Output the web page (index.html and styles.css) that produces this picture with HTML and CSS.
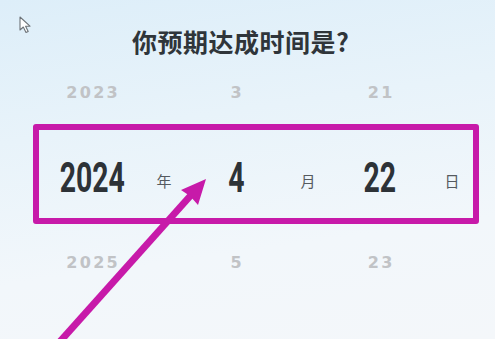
FILE: index.html
```html
<!DOCTYPE html>
<html lang="zh">
<head>
    <meta charset="utf-8"/>
    <title>日期选择</title>
    <link rel="stylesheet" href="styles.css">
</head>
<body>
<div class="page">
    <h1 class="title">你预期达成时间是?</h1>

    <div class="row row-dim">
        <span class="num">2023</span><span></span>
        <span class="num">3</span><span></span>
        <span class="num">21</span><span></span>
    </div>

    <div class="picked">
        <div class="row row-main">
            <span class="num"><b>2024</b></span><span class="unit">年</span>
            <span class="num"><b>4</b></span><span class="unit">月</span>
            <span class="num"><b>22</b></span><span class="unit">日</span>
        </div>
    </div>

    <div class="row row-dim row-next">
        <span class="num">2025</span><span></span>
        <span class="num">5</span><span></span>
        <span class="num">23</span><span></span>
    </div>

    <!-- 鼠标 -->
    <svg class="cursor" width="14" height="18" viewBox="0 0 14 18">
        <path d="M1 1 L1 14 L4.3 11 L7 16.5 L9.2 15.5 L6.6 10.2 L11 10.2 Z" fill="#fff" stroke="#6d7378" stroke-width="1.1" stroke-linejoin="round"/>
    </svg>

    <!-- 标注箭头 -->
    <svg class="arrow" width="495" height="339" viewBox="0 0 495 339">
        <line x1="56" y1="346" x2="192" y2="194" stroke="#c71aa9" stroke-width="7"/>
        <polygon points="206,179 198,205 190,196 181,190" fill="#c71aa9"/>
    </svg>
</div>
</body>
</html>
```

FILE: styles.css
```css
* {
    padding: 0;
    margin: 0;
    box-sizing: border-box;
}
body {
    width: 495px;
    height: 339px;
    overflow: hidden;
    background: linear-gradient(172deg, #ddeef9 0%, #e8f3fa 35%, #f2f7fb 70%, #f4f7fa 100%);
    font-family: "Noto Sans CJK SC", "Noto Sans", sans-serif;
}
.page {
    position: relative;
    height: 339px;
    padding-top: 26px;
}
.title {
    font-size: 25px;
    line-height: 30px;
    font-weight: 700;
    color: #2f353a;
    padding-left: 132px;
    letter-spacing: 0.5px;
}

.row {
    display: grid;
    grid-template-columns: 80px 64px 80px 64px 80px 64px;
    padding-left: 52px;
    align-items: center;
    text-align: center;
}
.row-dim {
    margin-top: 26px;
    height: 20px;
    font-family: "DejaVu Sans", sans-serif;
    font-weight: 700;
    font-size: 16px;
    letter-spacing: 2.3px;
    color: #c1c3c6;
}
.row-dim .num {
    padding-left: 2.3px;
}
.row-next {
    margin-top: 28px;
}

.picked {
    margin: 22px 0 0 33px;
    width: 446px;
    height: 100px;
    border: 6px solid #c71aa9;
    border-radius: 3px;
}
.row-main {
    height: 88px;
    padding-left: 13px;
    padding-top: 6px;
}
.row-main .num {
    display: flex;
    justify-content: center;
}
.row-main .num b {
    display: block;
    font-family: Roboto, "Liberation Sans", sans-serif;
    font-weight: 700;
    font-size: 43px;
    line-height: 50px;
    color: #2d3237;
    transform: scaleX(0.66);
}
.unit {
    font-size: 15px;
    color: #555a5f;
    padding-top: 6px;
}

.cursor {
    position: absolute;
    left: 19px;
    top: 16px;
}
.arrow {
    position: absolute;
    left: 0;
    top: 0;
}
```
